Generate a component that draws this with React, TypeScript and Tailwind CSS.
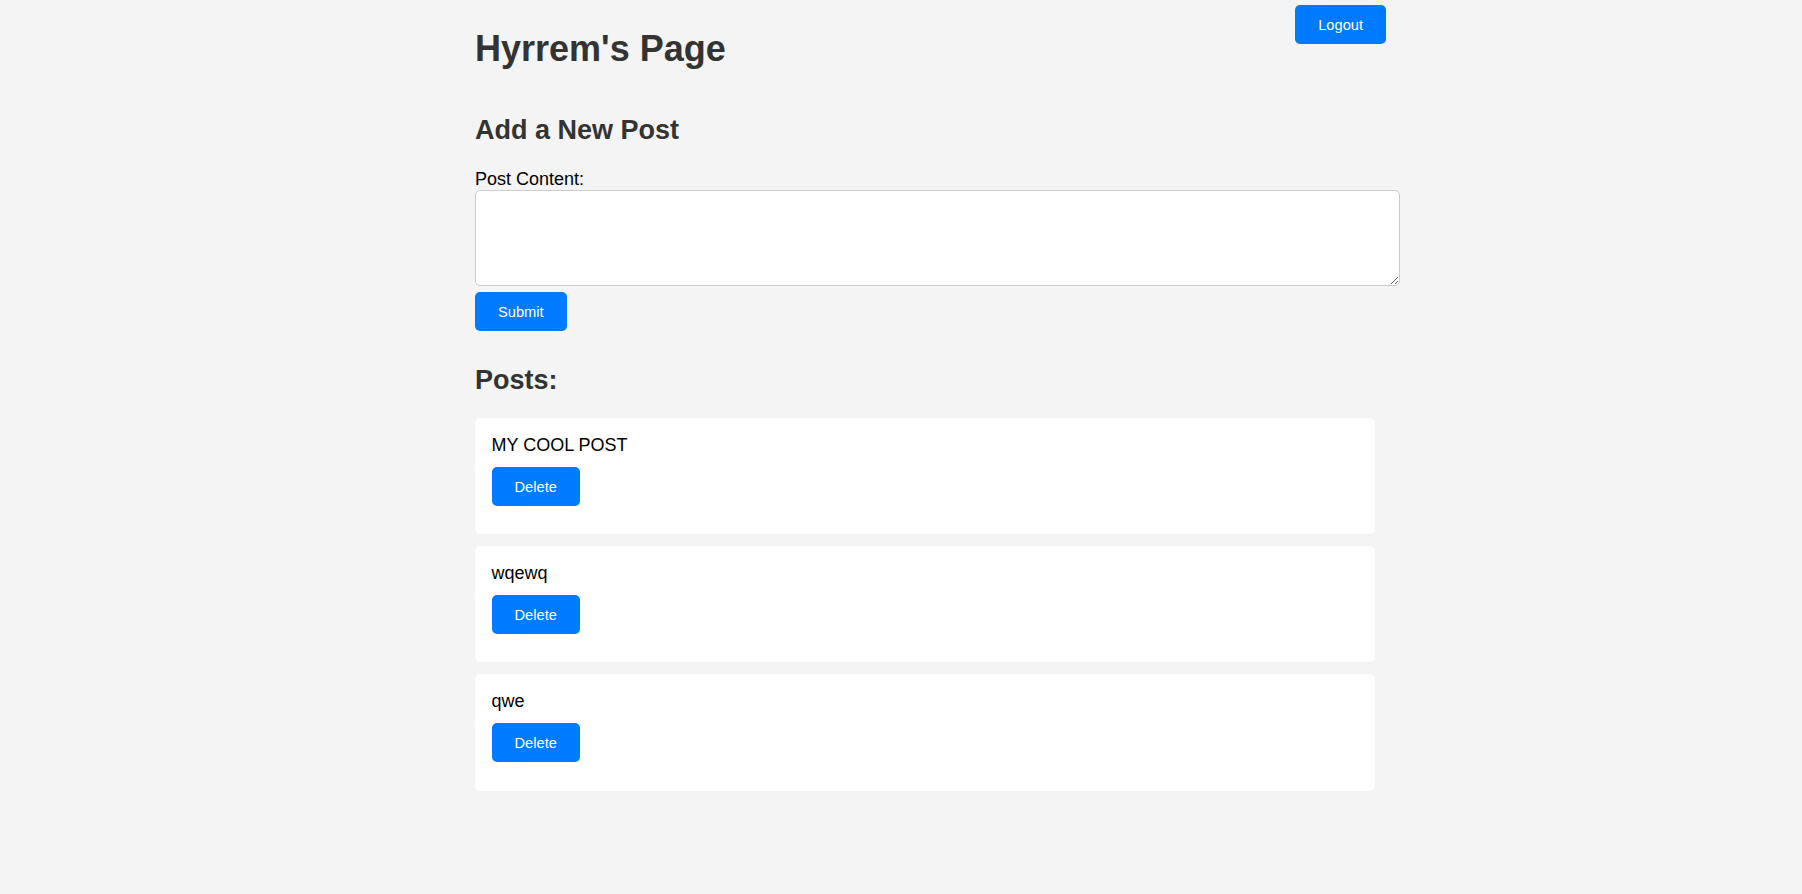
import { useState } from "react";

interface Post {
  id: number;
  content: string;
}

const initialPosts: Post[] = [
  { id: 1, content: "MY COOL POST" },
  { id: 2, content: "wqewq" },
  { id: 3, content: "qwe" },
];

const btn =
  "bg-[#007bff] text-white text-[14.67px] leading-[17px] px-[23px] pt-[11.5px] pb-[10.5px] rounded-[5px] hover:bg-[#0069d9]";

export default function App() {
  const [posts, setPosts] = useState<Post[]>(initialPosts);
  const [content, setContent] = useState("");

  function onSubmit(e: React.FormEvent<HTMLFormElement>) {
    e.preventDefault();
    if (!content.trim()) return;
    setPosts([{ id: Date.now(), content }, ...posts]);
    setContent("");
  }

  return (
    <div className="min-h-screen bg-[#f4f4f4] font-['Liberation_Sans',Arial,sans-serif] text-black">
      <div className="mx-auto w-[852px]">
        <div className="flex w-[911px] items-start justify-between">
          <h1 className="mt-[29px] text-[36px] font-bold leading-[40.5px] text-[#333]">
            Hyrrem's Page
          </h1>
          <button className={`${btn} mt-[5px]`}>Logout</button>
        </div>

        <h2 className="mt-[45.5px] text-[27px] font-bold leading-[30.4px] text-[#333]">
          Add a New Post
        </h2>

        <form onSubmit={onSubmit} className="mt-[23.6px]">
          <label htmlFor="content" className="block text-[18px] leading-[20.2px]">
            Post Content:
          </label>
          <textarea
            id="content"
            value={content}
            onChange={(e) => setContent(e.target.value)}
            className="mt-[1px] block h-[96px] w-[925px] resize rounded-[5px] border border-[#ccc] bg-white px-[11px] py-[8px] text-[17.6px] outline-none"
          />
          <button type="submit" className={`${btn} mt-[6px]`}>
            Submit
          </button>
        </form>

        <h2 className="mt-[33.5px] text-[27px] font-bold leading-[30.4px] text-[#333]">
          Posts:
        </h2>

        <div className="mt-[23px] flex flex-col gap-[12px]">
          {posts.map((p) => (
            <div
              key={p.id}
              className="w-[900px] rounded-[5.5px] bg-white px-[16.5px] pt-[16.5px] pb-[28.2px]"
            >
              <p className="text-[18px] leading-[20.2px]">{p.content}</p>
              <button
                onClick={() => setPosts(posts.filter((x) => x.id !== p.id))}
                className={`${btn} mt-[12.3px]`}
              >
                Delete
              </button>
            </div>
          ))}
        </div>
      </div>
    </div>
  );
}
